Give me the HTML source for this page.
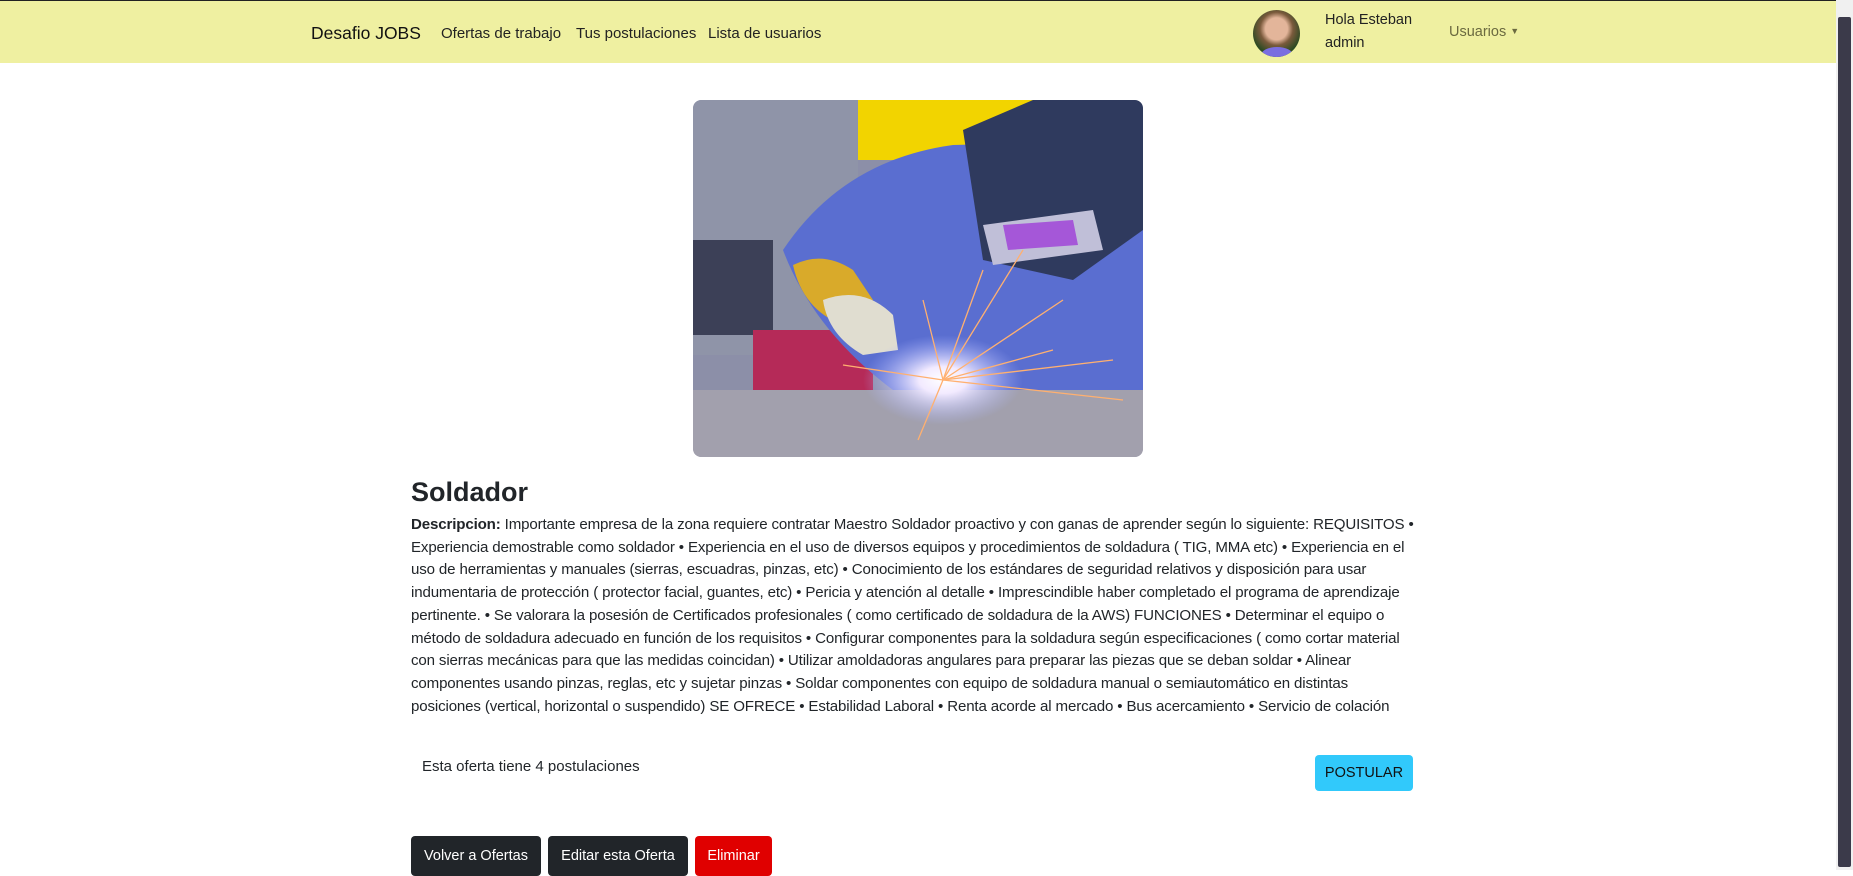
<!DOCTYPE html>
<html><head><meta charset="utf-8"><style>
*{box-sizing:border-box;margin:0;padding:0}
body{width:1853px;height:870px;overflow:hidden;background:#fff;font-family:"Liberation Sans",Arial,sans-serif;color:#212529;position:relative}
.nav{position:absolute;left:0;top:0;width:1836px;height:63px;background:#eff0a1;border-top:1px solid #222}
.sb{position:absolute;right:0;top:0;width:17px;height:870px;background:#f0f0f0}
.sb div{position:absolute;left:2px;top:17px;width:13px;height:850px;background:#3b3a4a;border-radius:2px}
.t{position:absolute;white-space:nowrap}
.brand{left:311px;top:22px;font-size:17.5px;color:#111}
.lk{top:24px;font-size:15px;color:#222}
.av{position:absolute;left:1253px;top:9px;width:47px;height:47px;border-radius:50%;background:radial-gradient(circle at 50% 40%,#e3b59a 0 30%,#7a5a3c 45%,#2c4a22 70%);overflow:hidden}
.av:after{content:"";position:absolute;left:8px;bottom:-6px;width:32px;height:16px;background:#7a6ee0;border-radius:50%}
.btn{position:absolute;color:#fff;font-size:14.5px;border-radius:4px;text-align:center}
.desc{position:absolute;left:411px;top:514px;font-size:15.1px;line-height:22.7px;white-space:nowrap;letter-spacing:-0.15px;color:#212529}
</style></head><body>
<div class="nav">
<div class="t brand">Desafio JOBS</div>
<div class="t lk" style="left:441px">Ofertas de trabajo</div>
<div class="t lk" style="left:576px">Tus postulaciones</div>
<div class="t lk" style="left:708px">Lista de usuarios</div>
<div class="av"></div>
<div class="t" style="left:1325px;top:11px;font-size:14.5px;color:#222">Hola Esteban</div>
<div class="t" style="left:1325px;top:34px;font-size:14.5px;color:#222">admin</div>
<div class="t" style="left:1449px;top:23px;font-size:14.5px;color:#6b6a40">Usuarios <span style="font-size:9px;position:relative;top:-2px">▼</span></div>
</div>
<div class="sb"><div></div></div>
<svg style="position:absolute;left:693px;top:100px;border-radius:8px" width="450" height="357" viewBox="0 0 450 357">
<defs><radialGradient id="sp" cx="0.5" cy="0.5" r="0.5"><stop offset="0" stop-color="#fff"/><stop offset="0.3" stop-color="#f2eaff"/><stop offset="1" stop-color="#a9b4ff" stop-opacity="0"/></radialGradient>
<clipPath id="c"><rect width="450" height="357" rx="8"/></clipPath></defs>
<g clip-path="url(#c)">
<rect width="450" height="357" fill="#8c8fa8"/>
<rect x="150" y="0" width="200" height="60" fill="#f2d400"/>
<rect x="0" y="0" width="165" height="255" fill="#8f94a8"/>
<rect x="0" y="140" width="80" height="95" fill="#3c4057"/>
<rect x="60" y="230" width="120" height="60" fill="#b52a58"/>
<path d="M90 150 Q150 60 260 45 L450 40 L450 290 L200 290 Q120 230 90 150Z" fill="#5a6ed0"/>
<path d="M270 30 L340 0 L450 0 L450 130 L380 180 L290 160Z" fill="#2f3a5e"/>
<path d="M290 125 L400 110 L410 150 L300 165Z" fill="#c0bfd8"/>
<path d="M310 125 L380 120 L385 145 L315 150Z" fill="#a557d8"/>
<path d="M100 165 Q130 150 160 170 L180 200 L150 225 Q110 210 100 165Z" fill="#d9aa2a"/>
<path d="M130 200 Q170 185 200 215 L205 250 L170 255 Q135 235 130 200Z" fill="#e0ddd0"/>
<rect x="0" y="290" width="450" height="67" fill="#a2a0ad"/>
<ellipse cx="250" cy="280" rx="80" ry="45" fill="url(#sp)"/>
<g stroke="#ffb070" stroke-width="1.3">
<line x1="250" y1="280" x2="370" y2="200"/><line x1="250" y1="280" x2="330" y2="150"/><line x1="250" y1="280" x2="420" y2="260"/>
<line x1="250" y1="280" x2="290" y2="170"/><line x1="250" y1="280" x2="430" y2="300"/><line x1="250" y1="280" x2="150" y2="265"/>
<line x1="250" y1="280" x2="230" y2="200"/><line x1="250" y1="280" x2="360" y2="250"/><line x1="250" y1="280" x2="225" y2="340"/></g>
</g></svg>
<div class="t" style="left:411px;top:477px;font-size:27px;font-weight:bold;color:#212529">Soldador</div>
<div class="desc"><b>Descripcion:</b> Importante empresa de la zona requiere contratar Maestro Soldador proactivo y con ganas de aprender según lo siguiente: REQUISITOS •<br>Experiencia demostrable como soldador • Experiencia en el uso de diversos equipos y procedimientos de soldadura ( TIG, MMA etc) • Experiencia en el<br>uso de herramientas y manuales (sierras, escuadras, pinzas, etc) • Conocimiento de los estándares de seguridad relativos y disposición para usar<br>indumentaria de protección ( protector facial, guantes, etc) • Pericia y atención al detalle • Imprescindible haber completado el programa de aprendizaje<br>pertinente. • Se valorara la posesión de Certificados profesionales ( como certificado de soldadura de la AWS) FUNCIONES • Determinar el equipo o<br>método de soldadura adecuado en función de los requisitos • Configurar componentes para la soldadura según especificaciones ( como cortar material<br>con sierras mecánicas para que las medidas coincidan) • Utilizar amoldadoras angulares para preparar las piezas que se deban soldar • Alinear<br>componentes usando pinzas, reglas, etc y sujetar pinzas • Soldar componentes con equipo de soldadura manual o semiautomático en distintas<br>posiciones (vertical, horizontal o suspendido) SE OFRECE • Estabilidad Laboral • Renta acorde al mercado • Bus acercamiento • Servicio de colación</div>
<div class="t" style="left:422px;top:758px;font-size:15px">Esta oferta tiene 4 postulaciones</div>
<div class="btn" style="left:1315px;top:755px;width:98px;height:36px;line-height:36px;background:#31c9fb;color:#111">POSTULAR</div>
<div class="btn" style="left:411px;top:836px;width:130px;height:40px;line-height:40px;background:#212529">Volver a Ofertas</div>
<div class="btn" style="left:548px;top:836px;width:140px;height:40px;line-height:40px;background:#212529">Editar esta Oferta</div>
<div class="btn" style="left:695px;top:836px;width:77px;height:40px;line-height:40px;background:#e00000">Eliminar</div>
</body></html>
